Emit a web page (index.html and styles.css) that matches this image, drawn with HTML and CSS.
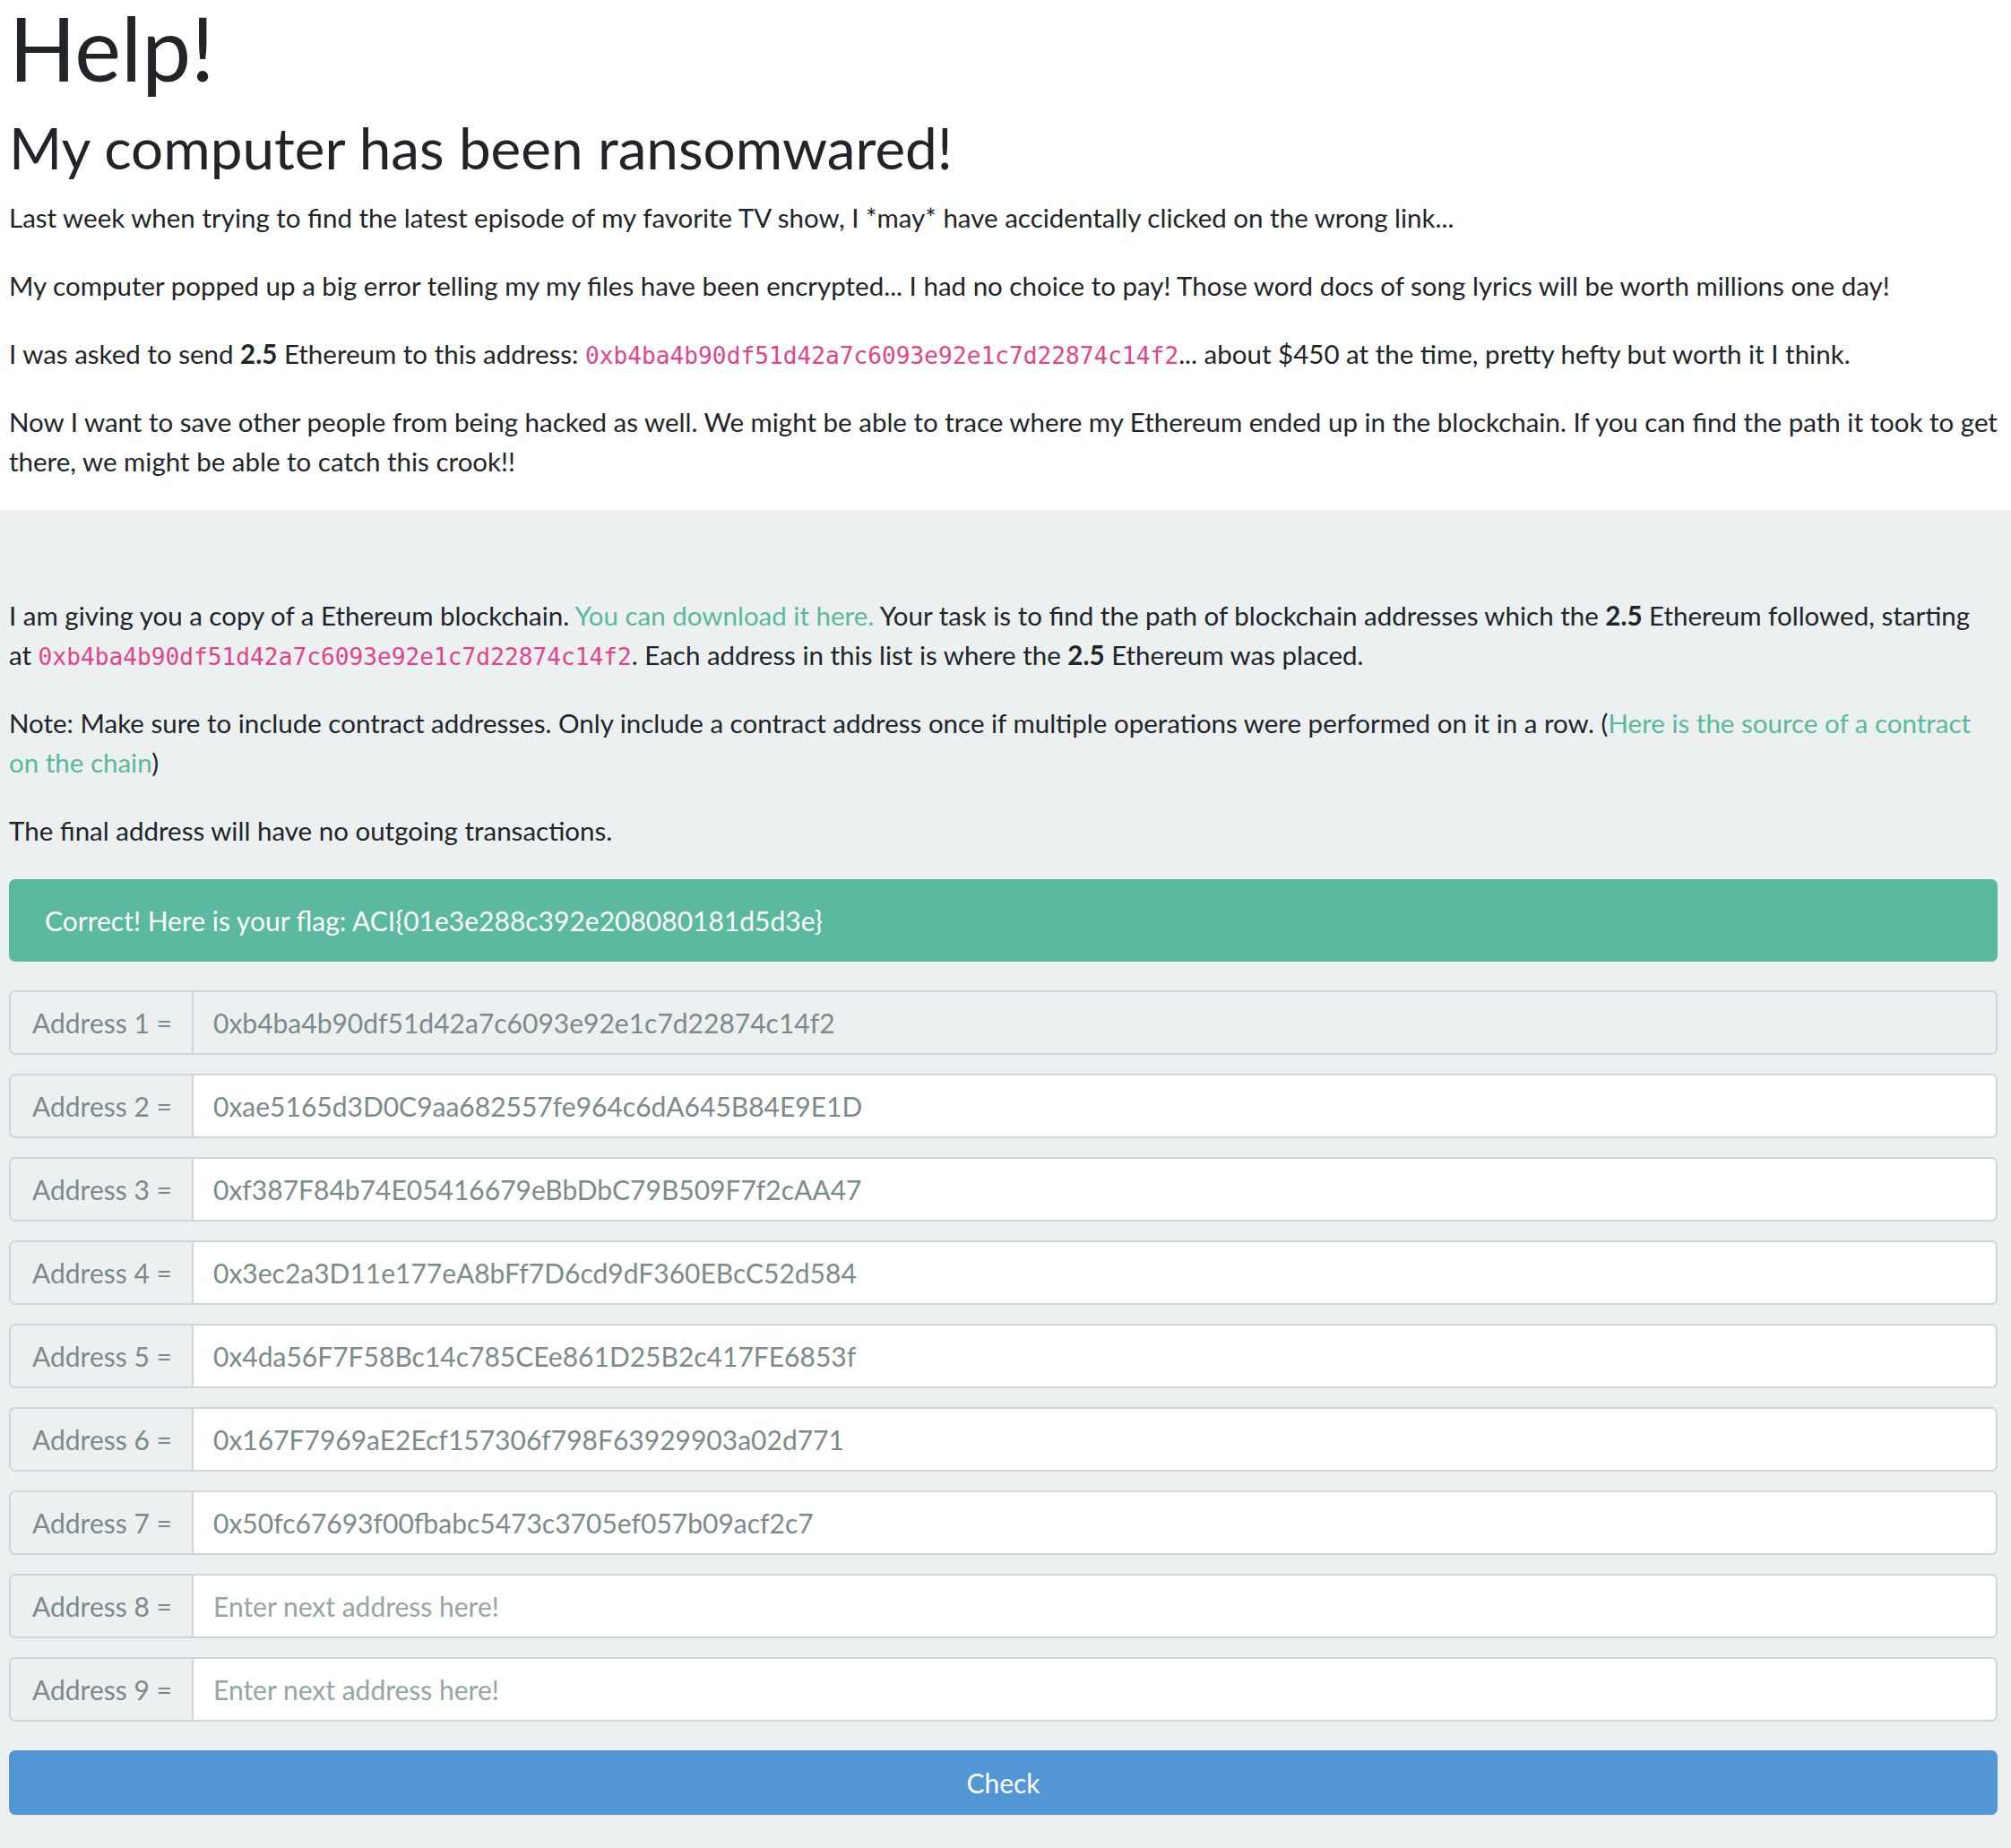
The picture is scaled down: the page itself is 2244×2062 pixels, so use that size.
FILE: index.html
```html
<!DOCTYPE html>
<html lang="en">
<head>
<meta charset="utf-8">
<title>Help!</title>
<link rel="stylesheet" href="styles.css">
</head>
<body>
<div class="intro">
  <h1 class="title">Help!</h1>
  <h2 class="subtitle">My computer has been ransomwared!</h2>
  <p>Last week when trying to find the latest episode of my favorite TV show, I *may* have accidentally clicked on the wrong link...</p>
  <p>My computer popped up a big error telling my my files have been encrypted... I had no choice to pay! Those word docs of song lyrics will be worth millions one day!</p>
  <p>I was asked to send <strong>2.5</strong> Ethereum to this address: <code>0xb4ba4b90df51d42a7c6093e92e1c7d22874c14f2</code>... about $450 at the time, pretty hefty but worth it I think.</p>
  <p>Now I want to save other people from being hacked as well. We might be able to trace where my Ethereum ended up in the blockchain. If you can find the path it took to get there, we might be able to catch this crook!!</p>
</div>
<div class="task">
  <p>I am giving you a copy of a Ethereum blockchain. <a href="#">You can download it here.</a> Your task is to find the path of blockchain addresses which the <strong>2.5</strong> Ethereum followed, starting at <code>0xb4ba4b90df51d42a7c6093e92e1c7d22874c14f2</code>. Each address in this list is where the <strong>2.5</strong> Ethereum was placed.</p>
  <p>Note: Make sure to include contract addresses. Only include a contract address once if multiple operations were performed on it in a row. (<a href="#">Here is the source of a contract on the chain</a>)</p>
  <p>The final address will have no outgoing transactions.</p>
  <div class="alert">Correct! Here is your flag: ACI{01e3e288c392e208080181d5d3e}</div>
  <form class="path-form">
    <div class="group"><span class="group-label">Address 1 =</span><input class="group-input is-readonly" type="text" value="0xb4ba4b90df51d42a7c6093e92e1c7d22874c14f2" readonly></div>
    <div class="group"><span class="group-label">Address 2 =</span><input class="group-input" type="text" value="0xae5165d3D0C9aa682557fe964c6dA645B84E9E1D"></div>
    <div class="group"><span class="group-label">Address 3 =</span><input class="group-input" type="text" value="0xf387F84b74E05416679eBbDbC79B509F7f2cAA47"></div>
    <div class="group"><span class="group-label">Address 4 =</span><input class="group-input" type="text" value="0x3ec2a3D11e177eA8bFf7D6cd9dF360EBcC52d584"></div>
    <div class="group"><span class="group-label">Address 5 =</span><input class="group-input" type="text" value="0x4da56F7F58Bc14c785CEe861D25B2c417FE6853f"></div>
    <div class="group"><span class="group-label">Address 6 =</span><input class="group-input" type="text" value="0x167F7969aE2Ecf157306f798F63929903a02d771"></div>
    <div class="group"><span class="group-label">Address 7 =</span><input class="group-input" type="text" value="0x50fc67693f00fbabc5473c3705ef057b09acf2c7"></div>
    <div class="group"><span class="group-label">Address 8 =</span><input class="group-input" type="text" placeholder="Enter next address here!"></div>
    <div class="group"><span class="group-label">Address 9 =</span><input class="group-input" type="text" placeholder="Enter next address here!"></div>
    <button class="check-btn" type="button">Check</button>
  </form>
</div>
</body>
</html>
```
FILE: styles.css
```css
html, body {
  margin: 0;
  padding: 0;
}
body {
  font-family: Lato, "Open Sans", sans-serif;
  font-size: 29.5px;
  line-height: 44px;
  color: #212529;
  background: #ecf0f1;
}
.intro {
  background: #ffffff;
  padding: 0 15px 0 10px;
  display: flow-root;
}
.title {
  font-size: 98px;
  font-weight: 400;
  line-height: 1.1;
  margin: 0 0 19px;
}
.subtitle {
  font-size: 63.8px;
  font-weight: 400;
  line-height: 1.2;
  margin: 0 0 17.5px;
}
p {
  margin: 0 0 32px;
}
strong {
  font-weight: 700;
}
code {
  font-family: "DejaVu Sans Mono", "Liberation Mono", monospace;
  font-size: 26.2px;
  line-height: 1;
  color: #e0448a;
}
a {
  color: #5bb99b;
  text-decoration: none;
}
.task {
  padding: 96px 15px 37px 10px;
  display: flow-root;
}
.alert {
  background: #5bb99f;
  color: #ffffff;
  border-radius: 7px;
  padding: 24px 40px;
  margin-bottom: 32px;
  font-size: 30px;
}
.path-form {
  display: flex;
  flex-direction: column;
  gap: 21px;
}
.group {
  display: flex;
  height: 72px;
  box-sizing: border-box;
  border: 2px solid #d0d5db;
  border-radius: 7px;
  overflow: hidden;
  font-size: 30px;
}
.group-label {
  display: flex;
  align-items: center;
  width: 204px;
  box-sizing: border-box;
  padding: 0 24px;
  background: #ecf0f1;
  color: #7b8a8b;
  border-right: 2px solid #d0d5db;
  white-space: nowrap;
}
.group-input {
  flex: 1;
  min-width: 0;
  border: 0;
  outline: none;
  padding: 0 22px;
  font-family: Lato, "Open Sans", sans-serif;
  font-size: 30px;
  color: #7b8a8b;
  background: #ffffff;
}
.group-input.is-readonly {
  background: #ecf0f1;
}
.group-input::placeholder {
  color: #95a5a6;
}
.check-btn {
  margin-top: 11px;
  height: 72px;
  border: 0;
  border-radius: 7px;
  background: #5296d5;
  color: #ffffff;
  font-family: Lato, "Open Sans", sans-serif;
  font-size: 30px;
}
```
